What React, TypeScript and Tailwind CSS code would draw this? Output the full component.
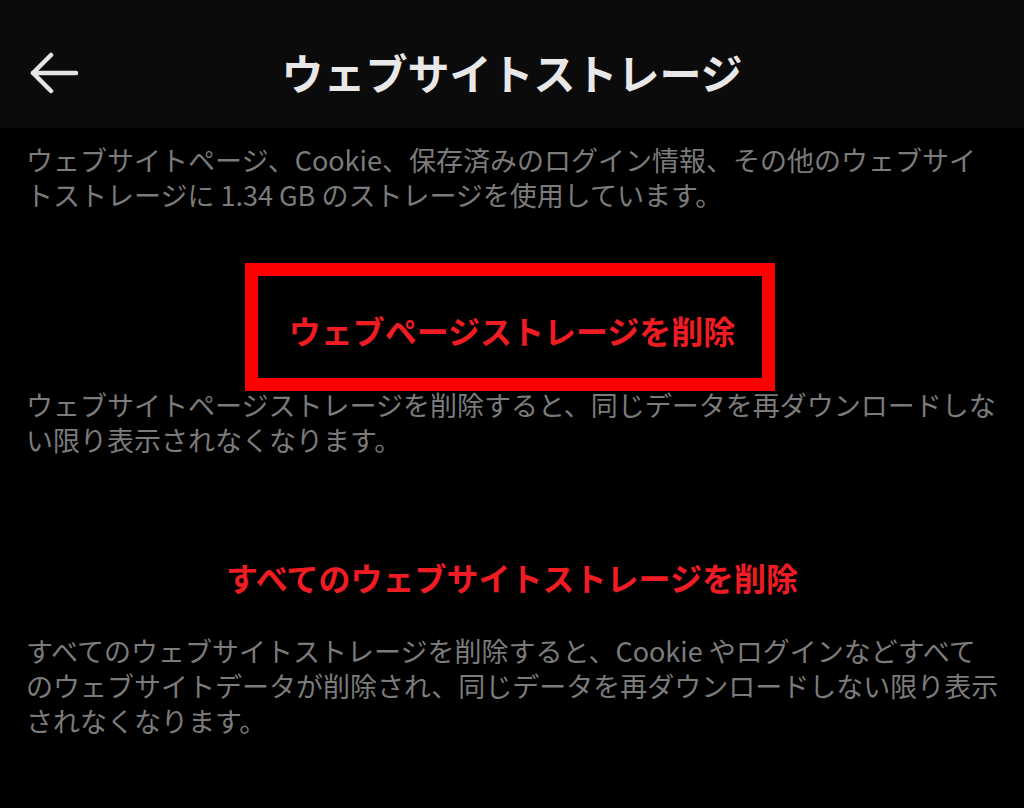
import React from "react"

const font = { fontFamily: '"Noto Sans CJK JP", "Noto Sans", sans-serif' }

function BackArrow() {
  return (
    <svg width="50" height="42" viewBox="0 0 50 42" fill="none" stroke="#e6e6e6" strokeWidth="4.5" strokeLinecap="round" strokeLinejoin="round">
      <path d="M4 21 H47" />
      <path d="M22 3 L4 21 L22 39" />
    </svg>
  )
}

function Lines({ lines }: { lines: string[] }) {
  return (
    <div className="text-[27px] leading-[35px] text-[#7b7b7b] whitespace-nowrap">
      {lines.map(l => (
        <div key={l}>{l}</div>
      ))}
    </div>
  )
}

export default function App() {
  return (
    <div className="w-[1024px] h-[808px] bg-black overflow-hidden" style={font}>
      {/* Header */}
      <div className="relative h-[128px] bg-[#0b0b0b] flex items-center justify-center">
        <button className="absolute left-[29px] top-[52px]">
          <BackArrow />
        </button>
        <h1 className="text-[42px] font-bold text-[#e8e8e8] leading-none mt-[16px]">
          ウェブサイトストレージ
        </h1>
      </div>

      <div className="px-[26px]">
        <div className="mt-[14px]">
          <Lines
            lines={[
              "ウェブサイトページ、Cookie、保存済みのログイン情報、その他のウェブサイ",
              "トストレージに 1.34 GB のストレージを使用しています。",
            ]}
          />
        </div>

        {/* Delete webpage storage */}
        <div className="relative pt-[98px] pb-[37px] flex justify-center">
          <span className="text-[32px] leading-[40px] font-semibold text-[#f01c24]">
            ウェブページストレージを削除
          </span>
          <div className="absolute left-[219px] top-[51px] w-[530px] h-[128px] border-[13px] border-[#ff0000]" />
        </div>

        <Lines
          lines={[
            "ウェブサイトページストレージを削除すると、同じデータを再ダウンロードしな",
            "い限り表示されなくなります。",
          ]}
        />

        {/* Delete all */}
        <div className="pt-[100px] pb-[36px] flex justify-center">
          <span className="text-[32px] leading-[40px] font-semibold text-[#f01c24]">
            すべてのウェブサイトストレージを削除
          </span>
        </div>

        <Lines
          lines={[
            "すべてのウェブサイトストレージを削除すると、Cookie やログインなどすべて",
            "のウェブサイトデータが削除され、同じデータを再ダウンロードしない限り表示",
            "されなくなります。",
          ]}
        />
      </div>
    </div>
  )
}
